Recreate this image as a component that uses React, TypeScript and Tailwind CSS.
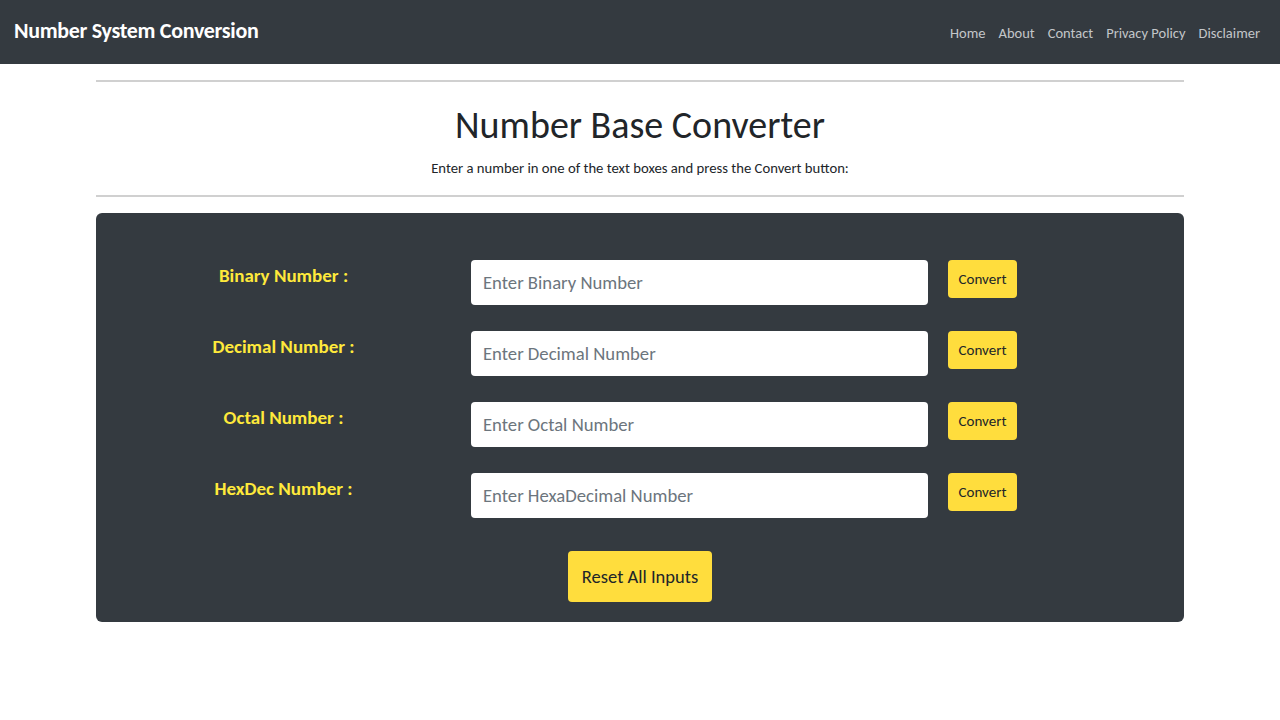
import React, { useState } from 'react';

const FONT = { fontFamily: 'Carlito, Lato, "Open Sans", sans-serif' };

const rows = [
  { key: 'bin', label: 'Binary Number :', placeholder: 'Enter Binary Number' },
  { key: 'dec', label: 'Decimal Number :', placeholder: 'Enter Decimal Number' },
  { key: 'oct', label: 'Octal Number :', placeholder: 'Enter Octal Number' },
  { key: 'hex', label: 'HexDec Number :', placeholder: 'Enter HexaDecimal Number' },
];

const bases: Record<string, number> = { bin: 2, dec: 10, oct: 8, hex: 16 };

export default function App() {
  const [values, setValues] = useState<Record<string, string>>({ bin: '', dec: '', oct: '', hex: '' });

  const convert = (key: string) => {
    const n = parseInt(values[key], bases[key]);
    if (isNaN(n)) return;
    setValues({
      bin: n.toString(2),
      dec: n.toString(10),
      oct: n.toString(8),
      hex: n.toString(16).toUpperCase(),
    });
  };

  return (
    <div className="min-h-screen bg-white" style={FONT}>
      <nav className="h-16 bg-[#343a40] flex items-center justify-between pl-[14px] pr-5">
        <span className="text-white text-[22px] font-bold tracking-[-0.3px] pb-1">Number System Conversion</span>
        <div className="flex items-center gap-[13px] text-[14.5px] text-[#c3c6c9] pt-1">
          <a href="#">Home</a>
          <a href="#">About</a>
          <a href="#">Contact</a>
          <a href="#">Privacy Policy</a>
          <a href="#">Disclaimer</a>
        </div>
      </nav>

      <div className="w-[1088px] mx-auto">
        <hr className="mt-4 border-t-2 border-[#d0d0d0]" />
        <h1 className="text-center text-[38px] text-[#212529] leading-none mt-[24px]">Number Base Converter</h1>
        <p className="text-center text-[14.7px] leading-[22px] text-[#212529] mt-[13px]">Enter a number in one of the text boxes and press the Convert button:</p>
        <hr className="mt-[16px] border-t-2 border-[#d0d0d0]" />

        <div className="mt-4 bg-[#343a40] rounded-md pt-[47px] pb-5">
          {rows.map((r) => (
            <div key={r.key} className="flex items-start h-[71px]">
              <label className="w-[375px] text-center text-[#ffe93b] font-bold text-[19px] pt-[2px]">{r.label}</label>
              <input
                value={values[r.key]}
                onChange={(e) => setValues({ ...values, [r.key]: e.target.value })}
                placeholder={r.placeholder}
                className="w-[457px] h-[45px] bg-white rounded-[4px] px-3 text-[18.7px] text-[#212529] placeholder:text-[#6c757d] outline-none"
              />
              <button
                onClick={() => convert(r.key)}
                className="ml-5 w-[69px] h-[38px] bg-[#ffdd3d] rounded-[4px] text-[15px] text-[#212529]"
              >
                Convert
              </button>
            </div>
          ))}
          <div className="flex justify-center mt-[7px]">
            <button
              onClick={() => setValues({ bin: '', dec: '', oct: '', hex: '' })}
              className="w-[144px] h-[51px] bg-[#ffdd3d] rounded-[4px] text-[18.5px] text-[#212529]"
            >
              Reset All Inputs
            </button>
          </div>
        </div>
      </div>
    </div>
  );
}
